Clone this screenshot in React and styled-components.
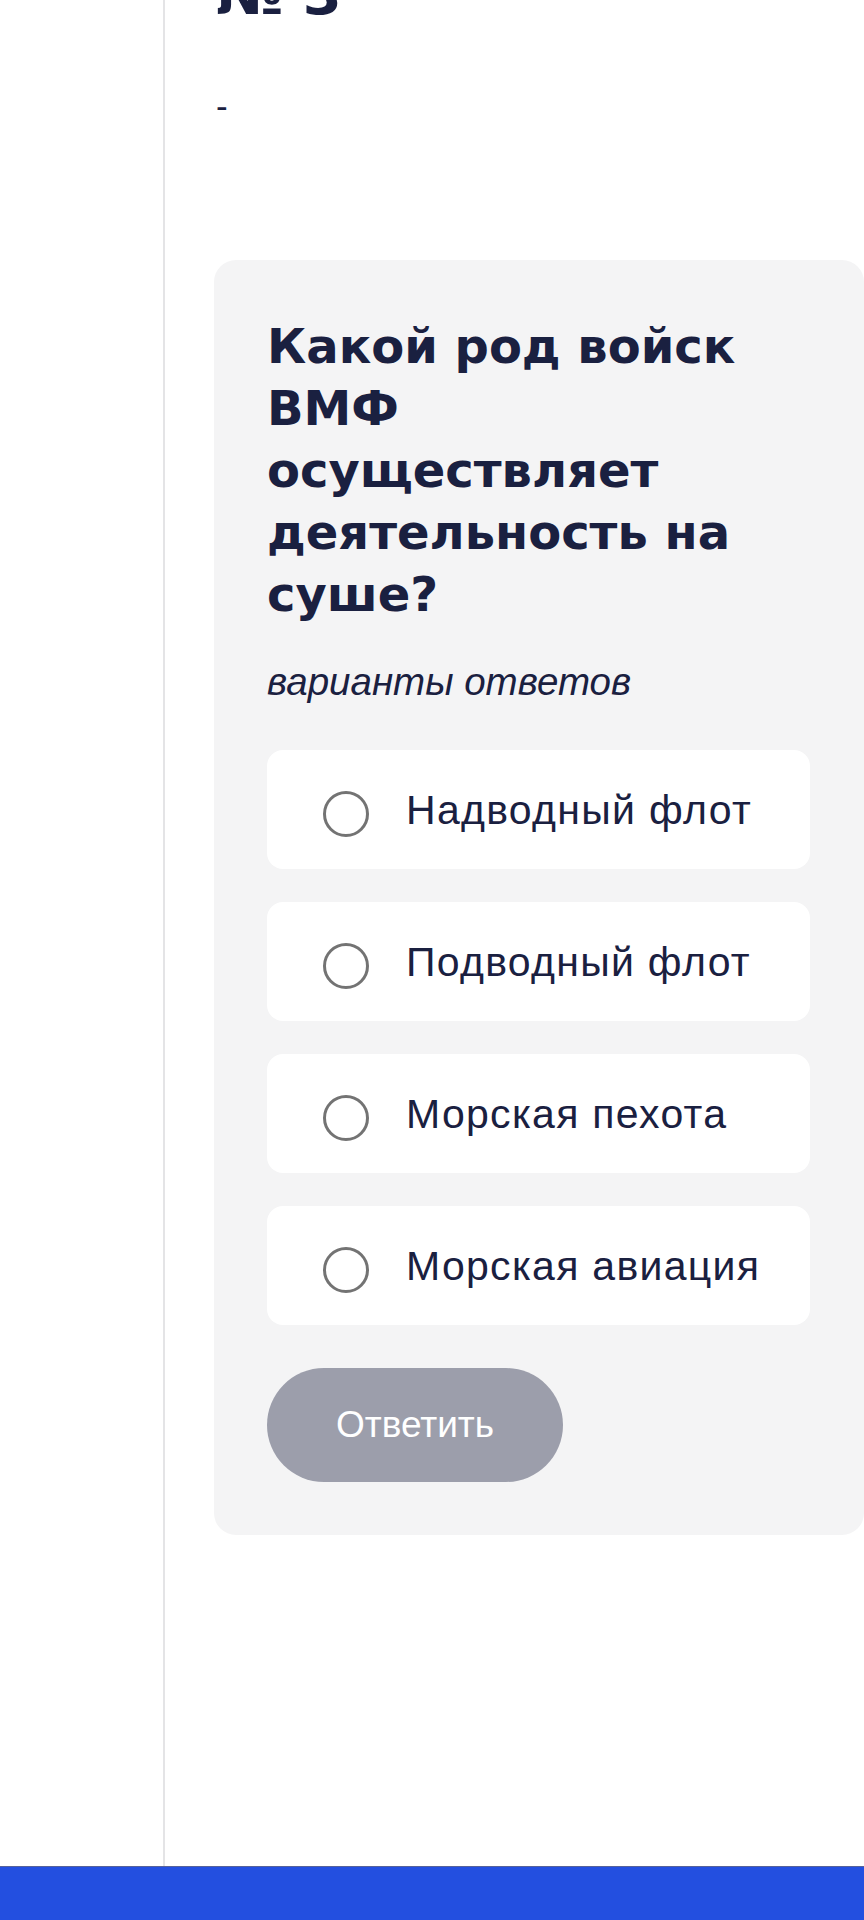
import React from "react";
import styled, { createGlobalStyle } from "styled-components";

const Global = createGlobalStyle`
  html, body {
    margin: 0;
    padding: 0;
    background: #ffffff;
  }
  body {
    font-family: "Liberation Sans", Arial, sans-serif;
    color: #1a2040;
    overflow: hidden;
  }
  * { box-sizing: border-box; }
`;

const Page = styled.div`
  width: 864px;
  min-height: 1920px;
  display: flex;
  flex-direction: column;
  overflow: hidden;
`;

const Main = styled.div`
  flex: 1;
  display: flex;
`;

const Sidebar = styled.div`
  width: 163px;
  flex-shrink: 0;
`;

const Content = styled.div`
  flex: 1;
  border-left: 2px solid #e4e4e6;
  padding-left: 49px;
  display: flex;
  flex-direction: column;
  align-items: stretch;
`;

const Number = styled.h2`
  margin: -33px 0 0 2px;
  font-family: "DejaVu Sans", sans-serif;
  font-weight: 700;
  font-size: 56px;
  line-height: 56px;
  color: #1a2040;
`;

const Dash = styled.div`
  margin: 63px 0 0 2px;
  font-size: 35px;
  line-height: 40px;
  color: #1a2040;
`;

const Card = styled.section`
  margin-top: 134px;
  background: #f4f4f5;
  border-radius: 22px;
  padding: 55px 54px 53px 53px;
  display: flex;
  flex-direction: column;
  align-items: flex-start;
`;

const Question = styled.h3`
  margin: 0;
  font-family: "DejaVu Sans", sans-serif;
  font-weight: 700;
  font-size: 48px;
  line-height: 62px;
  color: #1a2040;
  max-width: 520px;
`;

const Hint = styled.p`
  margin: 33px 0 0;
  font-style: italic;
  font-size: 38.5px;
  line-height: 48px;
  color: #1a2040;
`;

const Options = styled.div`
  margin-top: 44px;
  width: 100%;
  display: flex;
  flex-direction: column;
  gap: 33px;
`;

const Option = styled.label`
  height: 119px;
  background: #ffffff;
  border-radius: 16px;
  padding-left: 56px;
  display: flex;
  align-items: center;
  gap: 37px;
  cursor: pointer;
`;

const Radio = styled.span`
  width: 46px;
  height: 46px;
  flex-shrink: 0;
  border-radius: 50%;
  border: 3px solid #737373;
  background: #ffffff;
  margin-top: 8px;
`;

const OptionText = styled.span`
  font-size: 41px;
  letter-spacing: 1.3px;
  line-height: 48px;
  color: #1a2040;
`;

const Submit = styled.button`
  margin-top: 43px;
  width: 296px;
  height: 114px;
  border: none;
  border-radius: 57px;
  background: #9c9eab;
  color: #ffffff;
  font-family: "Liberation Sans", Arial, sans-serif;
  font-size: 37px;
  padding: 0;
`;

const Footer = styled.footer`
  height: 54px;
  flex-shrink: 0;
  background: #234fe0;
  border-top: 1px solid #56629a;
`;

const answers = [
  "Надводный флот",
  "Подводный флот",
  "Морская пехота",
  "Морская авиация",
];

export default function App() {
  return (
    <Page>
      <Global />
      <Main>
        <Sidebar />
        <Content>
          <Number>№ 3</Number>
          <Dash>-</Dash>
          <Card>
            <Question>Какой род войск ВМФ осуществляет деятельность на суше?</Question>
            <Hint>варианты ответов</Hint>
            <Options>
              {answers.map((a) => (
                <Option key={a}>
                  <Radio />
                  <OptionText>{a}</OptionText>
                </Option>
              ))}
            </Options>
            <Submit>Ответить</Submit>
          </Card>
        </Content>
      </Main>
      <Footer />
    </Page>
  );
}
